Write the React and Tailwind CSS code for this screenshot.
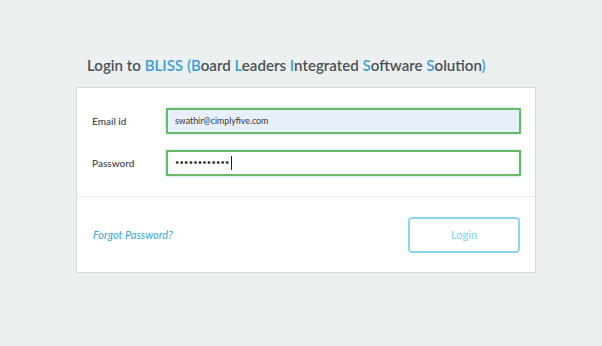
import React from 'react';

function Field({ label, value, filled, caret }) {
  return (
    <div className="flex items-center">
      <label className="w-[74px] text-[10px] font-semibold text-[#4a4f55]">{label}</label>
      <div
        className={`flex h-[26px] flex-1 items-center border-2 border-[#6ab76a] px-[7px] text-[8.8px] text-[#333] shadow-[0_0_3px_rgba(102,181,230,0.5)] ${filled ? 'bg-[#e8f0fe]' : 'bg-white'}`}
      >
        <span className={caret ? 'text-[7.5px] tracking-[0.2px]' : ''}>{value}</span>
        {caret && <span className="ml-[1px] h-[14px] w-[1px] bg-[#222]" />}
      </div>
    </div>
  );
}

export default function App() {
  return (
    <div className="h-[346px] w-[602px] bg-[#ecf0f1] pt-[53px] font-['Lato',sans-serif]">
      <div className="ml-[76px] w-[460px]">
        <h1 className="whitespace-nowrap pl-[11px] text-[15.1px] font-semibold leading-[24px] text-[#4b5158]">
          Login to <span className="text-[#3a9fd6]">BLISS</span>{' '}
          <span className="text-[#3a9fd6]">(B</span>oard <span className="text-[#3a9fd6]">L</span>eaders{' '}
          <span className="text-[#3a9fd6]">I</span>ntegrated <span className="text-[#3a9fd6]">S</span>oftware{' '}
          <span className="text-[#3a9fd6]">S</span>olution<span className="text-[#3a9fd6]">)</span>
        </h1>

        <div className="mt-[10px] border border-[#d6dadb] bg-white">
          <div className="flex flex-col gap-[16px] border-b border-[#eceeef] pb-[20px] pl-[15px] pr-[14px] pt-[20px]">
            <Field label="Email id" value="swathir@cimplyfive.com" filled />
            <Field label="Password" value="••••••••••••" caret />
          </div>
          <div className="flex items-center justify-between pb-[19px] pl-[16px] pr-[15px] pt-[20px]">
            <a className="text-[11px] italic text-[#3aa6d6]">Forgot Password?</a>
            <button className="h-[36px] w-[112px] rounded-[4px] border-2 border-[#8fd6f2] bg-white text-[11px] font-semibold text-[#8fd6f2]">
              Login
            </button>
          </div>
        </div>
      </div>
    </div>
  );
}
